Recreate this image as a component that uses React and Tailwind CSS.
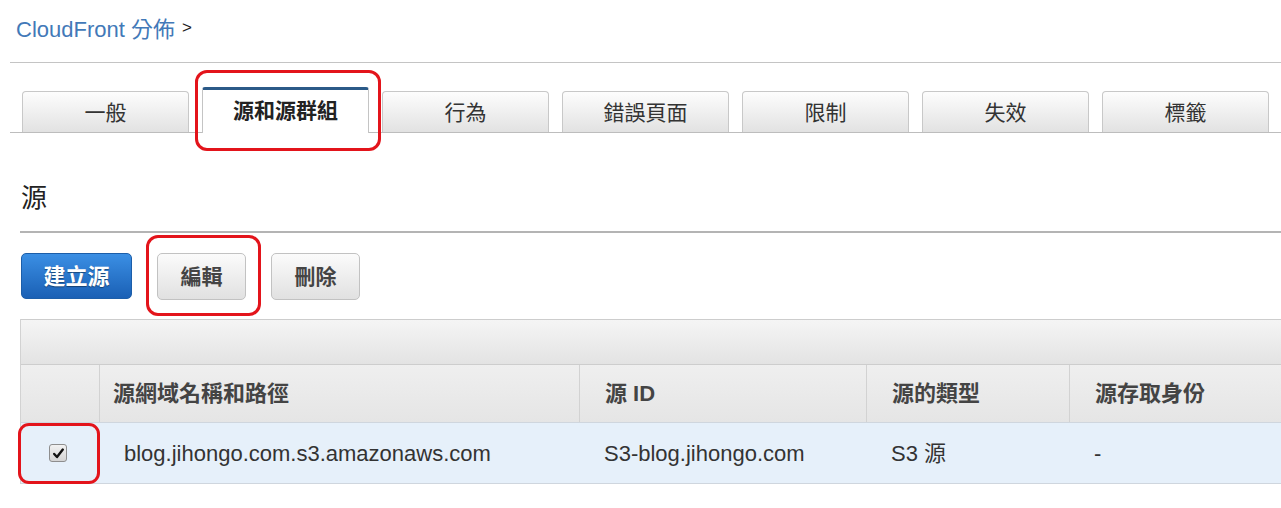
import React from "react";

const tabs = ["一般", "源和源群組", "行為", "錯誤頁面", "限制", "失效", "標籤"];

function Tab({ label, active }) {
  if (active) {
    return (
      <div className="relative z-10 mb-[-1px] flex h-[46px] w-[167px] shrink-0 items-center justify-center rounded-t-[3px] border-x border-t-[3px] border-x-[#c4c4c4] border-t-[#2b5a88] bg-white pb-[1px] text-[21px] font-bold text-[#222]">
        {label}
      </div>
    );
  }
  return (
    <div className="flex h-[41px] w-[167px] shrink-0 items-center justify-center rounded-t-[4px] border-x border-t border-[#c8c8c8] bg-gradient-to-b from-[#fdfdfd] to-[#e2e2e2] pt-[2px] text-[21px] text-[#333]">
      {label}
    </div>
  );
}

function Checkbox() {
  return (
    <div className="flex h-[18px] w-[18px] items-center justify-center rounded-[3px] border border-[#8e8e8e] bg-gradient-to-b from-[#f2f2f2] to-[#d4d4d4]">
      <svg width="13" height="13" viewBox="0 0 13 13">
        <path d="M2.2 7 L5 10 L10.8 2.6" fill="none" stroke="#111" strokeWidth="2.4" strokeLinecap="round" strokeLinejoin="round" />
      </svg>
    </div>
  );
}

export default function App() {
  return (
    <div className="relative h-[508px] w-[1281px] overflow-hidden bg-white font-['Liberation_Sans','Noto_Sans_CJK_TC',sans-serif]">
      {/* breadcrumb */}
      <div className="flex h-[62px] items-start pl-[16px] pt-[16px]">
        <span className="text-[22px] leading-[28px] text-[#4279b8]">CloudFront 分佈</span>
        <span className="ml-[7px] text-[17px] leading-[24px] text-[#222]">&gt;</span>
      </div>
      <div className="ml-[10px] h-px bg-[#c4c4c4]" />

      {/* tabs */}
      <div className="ml-[10px] flex h-[70px] items-end gap-[13px] border-b border-[#bdbdbd] pl-[12px]">
        {tabs.map((t, i) => (
          <Tab key={t} label={t} active={i === 1} />
        ))}
      </div>

      {/* heading */}
      <div className="h-[98px] pl-[21px] pt-[49px]">
        <h2 className="text-[26px] leading-[32px] text-[#222]">源</h2>
      </div>
      <div className="ml-[20px] h-[2px] bg-[#b4b4b4]" />

      {/* buttons */}
      <div className="flex gap-[25px] pl-[21px] pt-[20px]">
        <button className="flex h-[46px] w-[111px] items-center justify-center rounded-[5px] border border-[#1c5ea9] bg-gradient-to-b from-[#3b8fe4] to-[#1a60b5] text-[22px] font-bold text-white [text-shadow:0_1px_1px_rgba(0,0,0,0.4)]">
          建立源
        </button>
        <button className="flex h-[47px] w-[89px] items-center justify-center rounded-[5px] border border-[#c2c2c2] bg-gradient-to-b from-[#fbfbfb] to-[#e1e1e1] text-[21px] font-bold text-[#444]">
          編輯
        </button>
        <button className="flex h-[47px] w-[89px] items-center justify-center rounded-[5px] border border-[#c2c2c2] bg-gradient-to-b from-[#fbfbfb] to-[#e1e1e1] text-[21px] font-bold text-[#444]">
          刪除
        </button>
      </div>

      {/* table */}
      <div className="ml-[20px] mt-[19px] w-[1300px] border-l border-[#d2d2d2]">
        <div className="h-[45px] border-t border-[#cdcdcd] bg-gradient-to-b from-[#f5f5f5] to-[#e3e3e3]" />
        <div className="flex h-[58px] border-t border-[#cdcdcd] bg-gradient-to-b from-[#efefef] to-[#e5e5e5] text-[22px] font-bold text-[#444]">
          <div className="w-[78px] shrink-0" />
          <div className="flex w-[480px] shrink-0 items-center border-l border-[#d2d2d2] pl-[13px]">源網域名稱和路徑</div>
          <div className="flex w-[287px] shrink-0 items-center border-l border-[#d2d2d2] pl-[25px]">源 ID</div>
          <div className="flex w-[203px] shrink-0 items-center border-l border-[#d2d2d2] pl-[25px]">源的類型</div>
          <div className="flex flex-1 items-center border-l border-[#d2d2d2] pl-[25px]">源存取身份</div>
        </div>
        <div className="flex h-[62px] border-y border-[#cfd6de] bg-[#e6f0fa] text-[22px] text-[#333]">
          <div className="flex w-[78px] shrink-0 items-center justify-center pr-[4px]">
            <Checkbox />
          </div>
          <div className="flex w-[480px] shrink-0 items-center pl-[25px]">blog.jihongo.com.s3.amazonaws.com</div>
          <div className="flex w-[287px] shrink-0 items-center pl-[25px]">S3-blog.jihongo.com</div>
          <div className="flex w-[203px] shrink-0 items-center pl-[25px]">S3 源</div>
          <div className="flex flex-1 items-center pl-[25px]">-</div>
        </div>
      </div>

      {/* red annotation outlines */}
      <div className="pointer-events-none absolute left-[195px] top-[70px] h-[81px] w-[186px] rounded-[12px] border-[3px] border-[#e3141b]" />
      <div className="pointer-events-none absolute left-[146px] top-[235px] h-[81px] w-[115px] rounded-[12px] border-[3px] border-[#e3141b]" />
      <div className="pointer-events-none absolute left-[18px] top-[423px] h-[61px] w-[82px] rounded-[11px] border-[3px] border-[#e3141b]" />
    </div>
  );
}
